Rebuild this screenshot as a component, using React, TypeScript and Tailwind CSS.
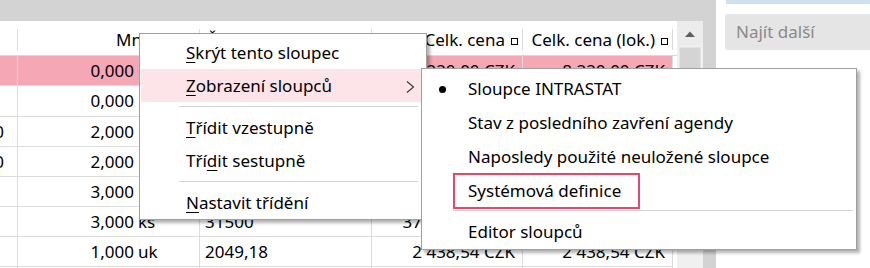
import React from "react";

type Row = {
  pink?: boolean;
  c1?: string;
  qty: string;
  unit?: string;
  c3?: string;
  c4?: string;
  c5?: string;
  h: string;
};

const rows: Row[] = [
  { pink: true, qty: "0,000", c4: "8 220,00 CZK", c5: "8 220,00 CZK", h: "h-[30px]" },
  { qty: "0,000", c4: "8 220,00 CZK", c5: "8 220,00 CZK", h: "h-[31px]" },
  { c1: "1,00", qty: "2,000", c3: "4110", c4: "8 220,00 CZK", c5: "8 220,00 CZK", h: "h-[30px]" },
  { c1: "1,00", qty: "2,000", c3: "4110", c4: "8 220,00 CZK", c5: "8 220,00 CZK", h: "h-[30px]" },
  { qty: "3,000", c3: "12600", c4: "37 800,00 CZK", c5: "37 800,00 CZK", h: "h-[30px]" },
  { qty: "3,000", unit: "ks", c3: "31500", c4: "37 800,00 CZK", c5: "37 800,00 CZK", h: "h-[30px]" },
  { qty: "1,000", unit: "uk", c3: "2049,18", c4: "2 438,54 CZK", c5: "2 438,54 CZK", h: "h-[30px]" },
  { qty: "1,000", unit: "uk", c3: "2049,18", c4: "2 438,54 CZK", c5: "2 438,54 CZK", h: "h-[30px]" },
];

function HeaderSep() {
  return <span className="ml-auto mb-[5px] h-[21px] w-px shrink-0 bg-[#d9d9d9]" />;
}

function Square() {
  return <span className="ml-[6px] mt-[3px] inline-block h-[7px] w-[7px] border border-black" />;
}

function MenuItem({
  children,
  hover,
  arrow,
}: {
  children: React.ReactNode;
  hover?: boolean;
  arrow?: boolean;
}) {
  return (
    <div className={`relative flex h-[33px] items-center pl-[45px] ${hover ? "bg-[#fce4e8]" : ""}`}>
      <span>{children}</span>
      {arrow && (
        <svg className="absolute right-[10px] top-[12px]" width="9" height="12" viewBox="0 0 9 12">
          <polyline points="1,0.5 7.5,6 1,11.5" fill="none" stroke="#333" strokeWidth="1.1" />
        </svg>
      )}
    </div>
  );
}

function SubItem({
  children,
  bullet,
  boxed,
}: {
  children: React.ReactNode;
  bullet?: boolean;
  boxed?: boolean;
}) {
  return (
    <div className="relative flex h-[34px] items-center pl-[45px]">
      {bullet && <span className="absolute left-[16px] top-[14px] h-[7px] w-[7px] rounded-full bg-black" />}
      <span>{children}</span>
      {boxed && (
        <span className="absolute left-[30px] top-[-1px] h-[36px] w-[187px] border-2 border-[#e4486c]" />
      )}
    </div>
  );
}

export default function App() {
  return (
    <div className="relative flex h-[268px] w-[870px] overflow-hidden bg-white font-['Noto_Sans',sans-serif] text-[17px] leading-[22px] text-black">
      {/* left: grid */}
      <div className="flex h-full w-[716px] shrink-0 flex-col bg-[#d3d3d3]">
        <div className="h-[21px] shrink-0" />
        <div className="flex min-h-0 flex-1">
          <div className="flex w-[677px] flex-col bg-white">
            {/* header */}
            <div className="grid h-[35px] shrink-0 grid-cols-[18px_182px_172px_151px_150px] border-b border-[#d9d9d9]">
              <div className="flex items-end">
                <HeaderSep />
              </div>
              <div className="flex items-end">
                <span className="mb-[4px] ml-[98px]">Množství</span>
                <HeaderSep />
              </div>
              <div className="flex items-end">
                <span className="mb-[4px] ml-[6px]">Číslo</span>
                <HeaderSep />
              </div>
              <div className="flex items-end justify-end">
                <span className="mb-[4px] flex items-center pr-[4px]">
                  Celk. cena
                  <Square />
                </span>
                <span className="mb-[5px] h-[21px] w-px shrink-0 bg-[#d9d9d9]" />
              </div>
              <div className="flex items-end justify-end">
                <span className="mb-[4px] flex items-center pr-[4px]">
                  Celk. cena (lok.)
                  <Square />
                </span>
                <span className="mb-[5px] h-[21px] w-px shrink-0 bg-[#d9d9d9]" />
              </div>
            </div>
            {/* body */}
            {rows.map((r, i) => (
              <div
                key={i}
                className={`grid shrink-0 grid-cols-[18px_182px_172px_151px_150px] ${r.h}`}
              >
                <div
                  className={`flex items-center justify-end overflow-hidden whitespace-nowrap border-b border-r border-[#dcdcdc] pr-[13px] ${r.pink ? "bg-[#f5a7b5] border-r-[#fbd3da]" : ""}`}
                >
                  {r.c1 ?? ""}
                </div>
                <div
                  className={`flex items-center whitespace-nowrap border-b border-r border-[#dcdcdc] ${r.pink ? "bg-[#f5a7b5]" : ""}`}
                >
                  <span className="w-[116px] shrink-0 text-right">{r.qty}</span>
                  {r.unit && <span className="ml-[4px]">{r.unit}</span>}
                </div>
                <div
                  className={`flex items-center whitespace-nowrap border-b border-r border-[#dcdcdc] pl-[5px] ${r.pink ? "bg-[#f5a7b5]" : ""}`}
                >
                  {r.c3 ?? ""}
                </div>
                <div
                  className={`flex items-center justify-end whitespace-nowrap border-b border-r border-[#dcdcdc] pr-[7px] ${r.pink ? "bg-[#f5a7b5]" : ""}`}
                >
                  {r.c4 ?? ""}
                </div>
                <div
                  className={`flex items-center justify-end whitespace-nowrap border-b border-r border-[#dcdcdc] pr-[7px] ${r.pink ? "bg-[#f5a7b5]" : ""}`}
                >
                  {r.c5 ?? ""}
                </div>
              </div>
            ))}
          </div>
          {/* scrollbar */}
          <div className="flex w-[26px] flex-col bg-[#f0f0f0]">
            <div className="flex h-[25px] shrink-0 items-center justify-center bg-[#ececec]">
              <svg width="10" height="6" viewBox="0 0 10 6">
                <polygon points="0,6 5,0.5 10,6" fill="#5f5f5f" />
              </svg>
            </div>
            <div className="mx-[2px] mt-[1px] h-[120px] rounded-[1px] border border-[#e4e4e4] bg-[#d4d4d4]" />
          </div>
        </div>
      </div>

      {/* right panel */}
      <div className="flex flex-1 flex-col bg-white pl-[9px]">
        <div className="ml-[1px] h-[4px] shrink-0 bg-[#cfe0f1]" />
        <div className="mt-[10px] flex h-[36px] shrink-0 items-center rounded-l-[3px] bg-[#e5e5e5] pl-[11px] text-[#8a8a8a]">
          Najít další
        </div>
      </div>

      {/* context menu */}
      <div className="absolute left-[139px] top-[33px] w-[288px] border border-[#a0a0a0] bg-white px-px pt-[2px] shadow-[3px_3px_3px_rgba(0,0,0,0.3)]">
        <MenuItem>
          <u className="underline-offset-[3px]">S</u>krýt tento sloupec
        </MenuItem>
        <MenuItem hover arrow>
          <u className="underline-offset-[3px]">Z</u>obrazení sloupců
        </MenuItem>
        <div className="py-[4px] pl-[38px] pr-[7px]">
          <div className="h-px bg-[#d4d4d4]" />
        </div>
        <MenuItem>
          <u className="underline-offset-[3px]">T</u>řídit vzestupně
        </MenuItem>
        <MenuItem>
          Tří<u className="underline-offset-[3px]">d</u>it sestupně
        </MenuItem>
        <div className="py-[4px] pl-[38px] pr-[7px]">
          <div className="h-px bg-[#d4d4d4]" />
        </div>
        <MenuItem>
          <u className="underline-offset-[3px]">N</u>astavit třídění
        </MenuItem>
      </div>

      {/* submenu */}
      <div className="absolute left-[421px] top-[68px] w-[436px] border border-[#a0a0a0] bg-white px-px pt-[3px] shadow-[3px_3px_3px_rgba(0,0,0,0.3)]">
        <SubItem bullet>Sloupce INTRASTAT</SubItem>
        <SubItem>Stav z posledního zavření agendy</SubItem>
        <SubItem>Naposledy použité neuložené sloupce</SubItem>
        <SubItem boxed>Systémová definice</SubItem>
        <div className="pb-[4px] pl-[30px] pr-[2px] pt-[2px]">
          <div className="h-px bg-[#d4d4d4]" />
        </div>
        <SubItem>Editor sloupců</SubItem>
      </div>
    </div>
  );
}
